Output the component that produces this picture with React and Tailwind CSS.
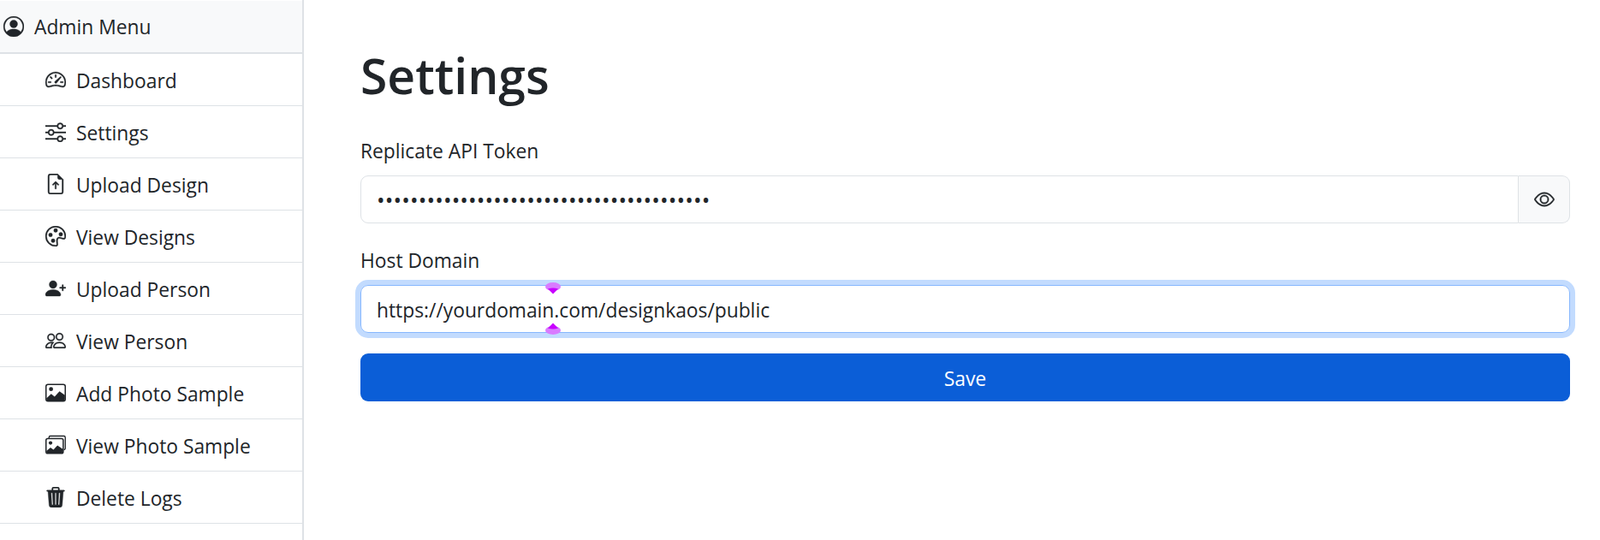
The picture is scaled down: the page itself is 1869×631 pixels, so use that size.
import React from 'react';
import {
  BsPersonCircle,
  BsSpeedometer2,
  BsSliders,
  BsFileEarmarkArrowUp,
  BsPalette,
  BsPersonPlusFill,
  BsPeople,
  BsEye,
  BsTrash3Fill,
} from 'react-icons/bs';

function ImageSolid() {
  return (
    <svg viewBox="0 0 16 16" fill="currentColor" className="w-6 h-6 shrink-0">
      <rect x=".5" y="1.5" width="15" height="13" rx="1.500" fill="none" stroke="currentColor" strokeWidth="1" />
      <circle cx="4.4" cy="5.1" r="1.600" />
      <path d="M.8 12.300 4.500 8.800l2.700 2.200 3.800-4.100 4.200 3V13a1.200 1.200 0 0 1-1.200 1.200H2A1.200 1.200 0 0 1 .8 13z" />
    </svg>
  );
}

function ImagesSolid() {
  return (
    <svg viewBox="0 0 16 16" fill="currentColor" className="w-6 h-6 shrink-0">
      <path d="M2.800 2.800V2.200A1.200 1.200 0 0 1 4 1h10.300a1.200 1.200 0 0 1 1.200 1.200v8.300a1.200 1.200 0 0 1-1.200 1.200" fill="none" stroke="currentColor" strokeWidth=".9" />
      <rect x=".5" y="3" width="13.400" height="11.500" rx="1.400" fill="none" stroke="currentColor" strokeWidth="1" />
      <circle cx="4" cy="6.400" r="1.400" />
      <path d="M.8 12.600 4 10l2.300 1.700 3.100-3.300 4.200 2.700V13a1.200 1.200 0 0 1-1.200 1.200H2A1.200 1.200 0 0 1 .8 13z" />
    </svg>
  );
}

const menuItems = [
  { label: 'Dashboard', icon: <BsSpeedometer2 className="w-6 h-6 shrink-0 stroke-[0.25]" /> },
  { label: 'Settings', icon: <BsSliders className="w-6 h-6 shrink-0 stroke-[0.25]" /> },
  { label: 'Upload Design', icon: <BsFileEarmarkArrowUp className="w-6 h-6 shrink-0 stroke-[0.25]" /> },
  { label: 'View Designs', icon: <BsPalette className="w-6 h-6 shrink-0 stroke-[0.25]" /> },
  { label: 'Upload Person', icon: <BsPersonPlusFill className="w-6 h-6 shrink-0 stroke-[0.25]" /> },
  { label: 'View Person', icon: <BsPeople className="w-6 h-6 shrink-0 stroke-[0.15]" /> },
  { label: 'Add Photo Sample', icon: <ImageSolid /> },
  { label: 'View Photo Sample', icon: <ImagesSolid /> },
  { label: 'Delete Logs', icon: <BsTrash3Fill className="w-6 h-6 shrink-0 stroke-[0.25]" /> },
];

function Sidebar() {
  return (
    <aside className="w-[355px] shrink-0 border-r-2 border-[#dee2e6]">
      <div className="mt-px h-[62px] flex items-center bg-[#f8f9fa] border-b-2 border-[#dee2e6] pl-1">
        <BsPersonCircle className="w-6 h-6 shrink-0 stroke-[0.25]" />
        <span className="ml-3 pt-[2px]">Admin Menu</span>
      </div>
      <ul>
        {menuItems.map(({ label, icon }) => (
          <li key={label} className="h-[61px] flex items-center border-b border-[#dee2e6] pl-[53px]">
            {icon}
            <span className="ml-[12px] pt-[4px]">{label}</span>
          </li>
        ))}
      </ul>
    </aside>
  );
}

function Marker() {
  return (
    <svg viewBox="0 0 18 14" className="w-[18px] h-[14px]">
      <ellipse cx="9" cy="5" rx="9" ry="5" fill="#d97bff" />
      <path d="M3 7.500C5 6.800 7 6.600 9 6.600s4 .200 6 .900L9 13.500z" fill="#c800ff" />
    </svg>
  );
}

export default function App() {
  return (
    <div className="min-h-screen flex bg-white text-[#212529] text-[22.8px] leading-[36px] font-['Open_Sans',sans-serif]">
      <Sidebar />
      <main className="flex-1 min-w-0 pl-[66px] pr-[35px] pt-[52px]">
        <h1 className="text-[57px] leading-[72px] font-semibold mb-[35px]">Settings</h1>

        <label className="block mb-[10px]">Replicate API Token</label>
        <div className="flex h-[56px] mb-[26px]">
          <input
            type="password"
            readOnly
            value="0123456789012345678901234567890123456789"
            className="flex-1 min-w-0 border border-[#dee2e6] rounded-l-[9px] px-[18px] outline-none text-[25.500px] tracking-[0.150px]"
          />
          <button className="w-[60px] shrink-0 flex items-center justify-center bg-[#f8f9fa] border border-l-0 border-[#dee2e6] rounded-r-[9px]">
            <BsEye className="w-6 h-6 stroke-[0.25]" />
          </button>
        </div>

        <label className="block mb-[10px]">Host Domain</label>
        <div className="relative h-[56px] mb-[24px]">
          <input
            type="text"
            readOnly
            value="https://yourdomain.com/designkaos/public"
            className="w-full h-full border border-[#86b7fe] rounded-[9px] pl-[18px] pr-[18px] pt-[2px] outline-none shadow-[0_0_0_6px_#c2dbfe]"
          />
          <div className="absolute left-[216px] -top-[3px]">
            <Marker />
          </div>
          <div className="absolute left-[216px] top-[44px] rotate-180">
            <Marker />
          </div>
        </div>

        <button className="w-full h-[56px] pt-[4px] rounded-[9px] bg-[#0b5ed7] text-white">Save</button>
      </main>
    </div>
  );
}
